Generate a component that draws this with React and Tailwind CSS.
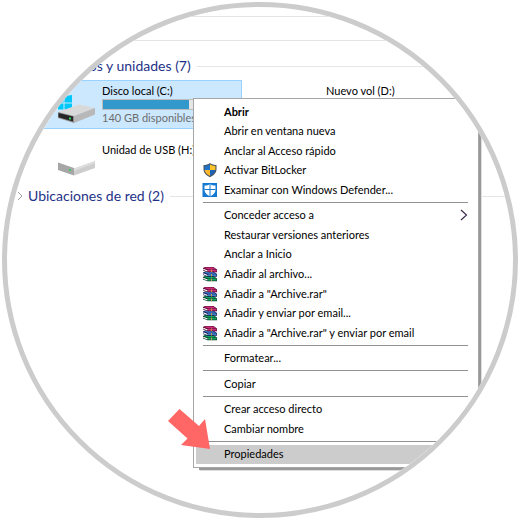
const menuGroups = [
    [
        { label: 'Abrir', bold: true },
        { label: 'Abrir en ventana nueva' },
        { label: 'Anclar al Acceso rápido' },
        { label: 'Activar BitLocker', icon: ShieldIcon },
        { label: 'Examinar con Windows Defender...', icon: DefenderIcon },
    ],
    [
        { label: 'Conceder acceso a', submenu: true },
        { label: 'Restaurar versiones anteriores' },
        { label: 'Anclar a Inicio' },
        { label: 'Añadir al archivo...', icon: RarIcon },
        { label: 'Añadir a "Archive.rar"', icon: RarIcon },
        { label: 'Añadir y enviar por email...', icon: RarIcon },
        { label: 'Añadir a "Archive.rar" y enviar por email', icon: RarIcon },
    ],
    [{ label: 'Formatear...' }],
    [{ label: 'Copiar' }],
    [{ label: 'Crear acceso directo' }, { label: 'Cambiar nombre' }],
    [{ label: 'Propiedades', active: true }],
];

function ShieldIcon() {
    return (
        <svg viewBox="0 0 16 16" className="size-4" aria-hidden="true">
            <path d="M8 1 C6 2.4 4 3 1.500 3 V7 C1.500 11 4.500 13.500 8 15.200 C11.500 13.500 14.500 11 14.500 7 V3 C12 3 10 2.400 8 1Z" fill="#4a5560" />
            <path d="M8 2.200 C6.500 3.200 5 3.700 2.600 3.900 V8 H8Z" fill="#1f72c8" />
            <path d="M8 2.200 C9.500 3.200 11 3.700 13.400 3.900 V8 H8Z" fill="#fcc42c" />
            <path d="M2.600 8 H8 V14 C5 12.500 3 10.500 2.600 8Z" fill="#fbb829" />
            <path d="M13.400 8 H8 V14 C11 12.500 13 10.500 13.400 8Z" fill="#1d62b4" />
        </svg>
    );
}

function DefenderIcon() {
    return (
        <svg viewBox="0 0 16 16" className="size-4" aria-hidden="true">
            <rect x="0.500" y="1" width="14.500" height="14" fill="#1379d3" />
            <path d="M8 2 C6.500 3.200 4.800 3.600 2.500 3.600 V8 C2.500 11 5 13 8 14.300 C11 13 13.500 11 13.500 8 V3.600 C11.200 3.600 9.500 3.200 8 2Z" fill="#fff" />
            <path d="M8 2 V14.500 M2.500 7.500 H13.500" stroke="#1379d3" strokeWidth="1" />
        </svg>
    );
}

function Book({ y, cover, dark }) {
    return (
        <g>
            <path d={`M1 ${y} L3 ${y - 1} H11.500 L15 ${y + 1.5} V${y + 4.2} H5.500 L1 ${y + 2.4}Z`} fill={dark} />
            <path d={`M2 ${y} L3.500 ${y - 0.5} H11 L14 ${y + 1.2} H5.500Z`} fill={cover} />
            <path d={`M6 ${y + 2.7} H14.500`} stroke={cover} strokeWidth="1.800" />
            <path d={`M1.200 ${y + 1.3} L5.500 ${y + 3}`} stroke="#fff" strokeWidth="1.200" />
        </g>
    );
}

function RarIcon() {
    return (
        <svg viewBox="0 0 16 16" className="size-4" aria-hidden="true">
            <Book y={11} cover="#12a860" dark="#06402a" />
            <Book y={6.5} cover="#3c80c8" dark="#141c5c" />
            <Book y={2} cover="#cc2c78" dark="#5a0a34" />
            <path d="M9.500 3.500 V6 M9.500 8 V10.500 M9.500 12.500 V15" stroke="#c89848" strokeWidth="1" />
        </svg>
    );
}

function DriveIcon({ system }) {
    return (
        <svg viewBox="0 0 40 30" className="h-[30px] w-10" aria-hidden="true">
            {system && (
                <path d="M1 3.200 L6.500 2.400 V8.500 H1Z M7.500 2.200 L15 1 V8.500 H7.500Z M1 9.500 H6.500 V15.500 H1Z M7.500 9.500 H15 V15.500 H7.500Z" fill="#00c8fb" />
            )}
            <path d="M1 18 L22 10.500 L38 14 L17 22Z" fill="#d9d9d9" />
            <path d="M17 22 L38 14 V20.500 L17 29Z" fill="#b8b8b8" />
            <path d="M1 18 L17 22 V29 L1 24Z" fill="#8f8f8f" />
            <path d="M1.500 19 L16 22.600 V27.500 L1.500 23.200Z" fill="#262626" />
            <rect x="12" y="23.500" width="2" height="2" fill="#2fd45c" />
        </svg>
    );
}

function UsbIcon() {
    return (
        <svg viewBox="0 0 40 16" className="mt-[7px] h-4 w-10" aria-hidden="true">
            <path d="M1 2.500 L17 8 V15.500 L1 10Z" fill="#a6a6a6" />
            <path d="M17 8.500 L38 1 V8 L17 15.500Z" fill="#cdcdcd" />
            <path d="M17 8.500 L38 1 V3 L17 11Z" fill="#dedede" />
            <rect x="12" y="9" width="2" height="2" fill="#45c968" />
        </svg>
    );
}

function GroupHeading({ title, collapsed }) {
    return (
        <div className="flex h-[18px] items-center">
            <span className="w-[21px] pl-2.5">
                {collapsed && (
                    <svg viewBox="0 0 6 10" className="h-2.5 w-1.5" aria-hidden="true">
                        <path d="M1 1 L5 5 L1 9" fill="none" stroke="#a0a0a0" />
                    </svg>
                )}
            </span>
            <h2 className="text-[14px] leading-[18px] whitespace-nowrap text-[#1e3287]">{title}</h2>
            <span className="ml-1.5 h-px flex-1 bg-[#e5e5e5]" />
        </div>
    );
}

function DriveTile({ name, info, used, selected, icon }) {
    return (
        <button
            type="button"
            className={`flex items-start border pb-0.5 pl-[29px] text-left text-[11px] leading-4 whitespace-nowrap
                ${selected ? 'border-[#99d1ff] bg-[#cce8ff]' : 'border-transparent'}`}
        >
            <span className="w-[45px] shrink-0 pt-[13px]">{icon}</span>
            <span className="flex-1 pt-0.5 pr-1">
                <span className="block text-black">{name}</span>
                {info && (
                    <>
                        <span className="block h-[11px] border border-[#bcbcbc] bg-[#e6e6e6]">
                            <span className="block h-full bg-[#3399cc]" style={{ width: `${used}%` }} />
                        </span>
                        <span className="block text-[#6d6d6d]">{info}</span>
                    </>
                )}
            </span>
        </button>
    );
}

function MenuItem({ item }) {
    const Icon = item.icon;
    return (
        <li className="flex flex-1">
            <button
                type="button"
                role="menuitem"
                className={`flex flex-1 items-center pr-2 pl-1.5 text-left text-[11px] leading-4 whitespace-nowrap text-black
                    ${item.bold ? 'font-bold' : ''} ${item.active ? 'bg-[#cccccc]' : ''}`}
            >
                <span className="w-[22px] shrink-0">{Icon && <Icon />}</span>
                <span className="flex-1">{item.label}</span>
                {item.submenu && (
                    <svg viewBox="0 0 8 12" className="h-3 w-2" aria-hidden="true">
                        <path d="M1 1 L6.500 6 L1 11" fill="none" stroke="#40304f" strokeWidth="1.200" />
                    </svg>
                )}
            </button>
        </li>
    );
}

function ContextMenu() {
    return (
        <ul
            role="menu"
            className="absolute top-[91px] left-[186px] flex h-[370px] w-[286px] flex-col border border-[#a6a6a6] bg-white px-0.5 py-[3px] shadow-[4px_4px_0_-2px_#999999,5px_5px_0_-2px_#dddddd]"
        >
            {menuGroups.map((group, i) => [
                i > 0 && (
                    <li key={`sep-${i}`} role="separator" className="mr-2 ml-[7px] flex h-1.5 items-center">
                        <span className="h-px flex-1 bg-[#919191]" />
                    </li>
                ),
                ...group.map((item) => <MenuItem key={item.label} item={item} />),
            ])}
        </ul>
    );
}

export default function App() {
    return (
        <main className="relative aspect-square w-full bg-white p-0.5 font-['Lato',sans-serif]">
            <div className="relative h-full overflow-hidden rounded-full border-[5px] border-[#cccccc]">
                <div className="h-2.5 border-b border-[#e5e5e5]" />
                <div className="h-6 border-b border-[#e5e5e5]" />
                <section className="pt-4">
                    <GroupHeading title="Dispositivos y unidades (7)" />
                    <div className="mt-[5px] ml-5 grid grid-cols-[215px_215px] gap-x-[9px] gap-y-2.5">
                        <DriveTile name="Disco local (C:)" info="140 GB disponibles de" used={65} selected icon={<DriveIcon system />} />
                        <DriveTile name="Nuevo vol (D:)" icon={<DriveIcon />} />
                        <DriveTile name="Unidad de USB (H:)" icon={<UsbIcon />} />
                    </div>
                </section>
                <section className="pt-2">
                    <GroupHeading title="Ubicaciones de red (2)" collapsed />
                </section>
                <ContextMenu />
            </div>
            <svg viewBox="0 0 44 42" className="absolute top-[408px] left-[167px] h-[42px] w-11" aria-hidden="true">
                <path d="M12.500 1 L32 18 L38 11 L43 41 L14 37 L20.500 30.500 L1 13Z" fill="#ff6666" />
            </svg>
        </main>
    );
}
